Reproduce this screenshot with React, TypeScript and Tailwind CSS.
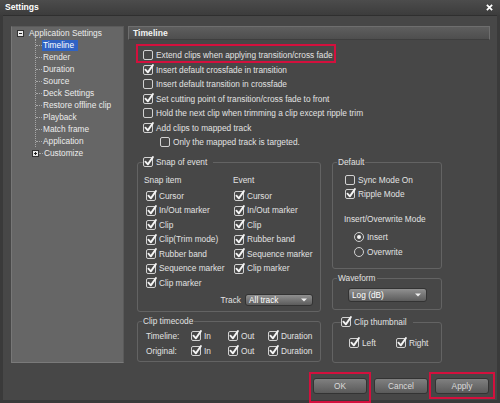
import React from 'react';
import clsx from 'clsx';

function Check({ on }: { on?: boolean }) {
  return (
    <span className="relative w-[10px] h-[10px] shrink-0 rounded-[2px] border border-[#d2d2d2]">
      {on && (
        <svg viewBox="0 0 10 10" className="absolute -left-px -top-[2px] w-[11px] h-[11px] overflow-visible">
          <path d="M2.2 5.2 L4.4 7.6 L9 1" fill="none" stroke="#f4f4f4" strokeWidth="1.7" strokeLinecap="round" strokeLinejoin="round" />
        </svg>
      )}
    </span>
  );
}

function Radio({ on }: { on?: boolean }) {
  return (
    <span className="w-[10px] h-[10px] shrink-0 rounded-full border border-[#d2d2d2] flex items-center justify-center">
      {on && <span className="w-[4px] h-[4px] rounded-full bg-[#f4f4f4]" />}
    </span>
  );
}

function Opt({ on, children, className }: { on?: boolean; children: React.ReactNode; className?: string }) {
  return (
    <div className={clsx('flex items-center gap-[3px] whitespace-nowrap', className)}>
      <Check on={on} />
      <span>{children}</span>
    </div>
  );
}

function Arrow() {
  return (
    <svg viewBox="0 0 6 4" className="w-[6px] h-[4px]">
      <path d="M0 0.5 L6 0.5 L3 3.5 Z" fill="#f0f0f0" />
    </svg>
  );
}

function Select({ label, className }: { label: string; className?: string }) {
  return (
    <div
      className={clsx(
        'rounded-[3px] border border-[#333] bg-gradient-to-b from-[#909090] to-[#5c5c5c] flex items-center justify-between pl-[3px] pr-[5px] text-white',
        className
      )}
    >
      <span>{label}</span>
      <Arrow />
    </div>
  );
}

function Btn({ children }: { children: React.ReactNode }) {
  return (
    <div className="w-[54px] h-[16px] rounded-[3px] border border-[#333] bg-gradient-to-b from-[#808080] to-[#5a5a5a] flex items-center justify-center text-[#dadada]">
      {children}
    </div>
  );
}

const tree = ['Timeline', 'Render', 'Duration', 'Source', 'Deck Settings', 'Restore offline clip', 'Playback', 'Match frame', 'Application'];

const snapItems = ['Cursor', 'In/Out marker', 'Clip', 'Clip(Trim mode)', 'Rubber band', 'Sequence marker', 'Clip marker'];
const eventItems = ['Cursor', 'In/Out marker', 'Clip', 'Rubber band', 'Sequence marker', 'Clip marker'];

export default function App() {
  return (
    <div className="relative w-[500px] h-[403px] overflow-hidden bg-[#3a3a3a] font-['Liberation_Sans',Arial,sans-serif] text-[8.3px] leading-none text-[#e2e2e2]">
      {/* Title bar */}
      <div className="h-[15px] flex items-center justify-between pl-[5px] pr-[7px] bg-gradient-to-b from-[#4c4c4c] to-[#3c3c3c]">
        <span className="font-bold text-[8.6px] text-white">Settings</span>
        <svg viewBox="0 0 8 8" className="w-[7px] h-[7px]">
          <path d="M1 1 L7 7 M7 1 L1 7" stroke="#fff" strokeWidth="2" />
        </svg>
      </div>

      {/* Window body */}
      <div className="mx-[3px] h-[385px] bg-[#474747] border-t border-[#2f2f2f] flex flex-col">
        <div className="flex pl-[8px] pt-[10px]">
          {/* Tree */}
          <div className="w-[113px] h-[337px] bg-[#666] border border-[#5a5a5a] border-l-[#777] border-b-[#7a7a7a] text-[#ececec]">
            <div className="h-[12px] flex items-center pl-[5px]">
              <span className="w-[7px] h-[7px] bg-[#e8e8e8] border border-[#333] flex items-center justify-center">
                <span className="w-[3px] h-px bg-[#222]" />
              </span>
              <span className="ml-[5px]">Application Settings</span>
            </div>
            <div className="ml-[23px] border-l border-dotted border-[#a8a8a8]">
              {tree.map((t, i) => (
                <div key={t} className="h-[12px] flex items-center">
                  <span className="w-[6px] border-t border-dotted border-[#a8a8a8]" />
                  <span className={clsx('px-[1px] h-[11px] flex items-center', i === 0 && 'bg-[#2f63c4] text-white pr-[4px]')}>{t}</span>
                </div>
              ))}
            </div>
            <div className="h-[12px] flex items-center pl-[20px]">
              <span className="w-[7px] h-[7px] bg-[#e8e8e8] border border-[#333] relative flex items-center justify-center">
                <span className="w-[3px] h-px bg-[#222]" />
                <span className="absolute w-px h-[3px] bg-[#222]" />
              </span>
              <span className="w-[4px] border-t border-dotted border-[#a8a8a8]" />
              <span className="ml-[1px]">Customize</span>
            </div>
          </div>

          {/* Right panel */}
          <div className="ml-[4px] w-[362px]">
            <div className="h-[14px] border border-[#6e6e6e] border-b-[#3e3e3e] bg-gradient-to-b from-[#5e5e5e] to-[#4e4e4e] flex items-center pl-[4px] font-bold text-[8.6px] text-[#f2f2f2]">
              Timeline
            </div>

            <div className="mt-[8px] pl-[15px]">
              <div className="relative">
                <Opt className="h-[14.5px]">Extend clips when applying transition/cross fade</Opt>
                <div className="absolute left-[-7px] top-[-4px] w-[200px] h-[19px] border-2 border-[#d3103d]" />
              </div>
              <Opt on className="h-[14.5px]">Insert default crossfade in transition</Opt>
              <Opt className="h-[14.5px]">Insert default transition in crossfade</Opt>
              <Opt on className="h-[14.5px]">Set cutting point of transition/cross fade to front</Opt>
              <Opt className="h-[14.5px]">Hold the next clip when trimming a clip except ripple trim</Opt>
              <Opt on className="h-[14.5px]">Add clips to mapped track</Opt>
              <Opt className="h-[14.5px] pl-[17px]">Only the mapped track is targeted.</Opt>
            </div>

            <div className="mt-[6.5px] ml-[9px] flex">
              {/* Left groups */}
              <div className="w-[184px] flex flex-col">
                <fieldset className="h-[156px] border border-[#636363] rounded-[3px]">
                  <legend className="ml-[5px] pr-[6px] h-[12px]">
                    <Opt on className="h-[12px]">Snap of event</Opt>
                  </legend>
                  <div className="pt-[6px] pl-[6px] flex">
                    <div className="w-[89px]">
                      <div className="h-[12px] flex items-center">Snap item</div>
                      <div className="mt-[2.75px] pl-[2px]">
                        {snapItems.map((s) => (
                          <Opt key={s} on className="h-[14.5px]">{s}</Opt>
                        ))}
                      </div>
                    </div>
                    <div>
                      <div className="h-[12px] flex items-center">Event</div>
                      <div className="mt-[2.75px] pl-[1px]">
                        {eventItems.map((s) => (
                          <Opt key={s} on className="h-[14.5px]">{s}</Opt>
                        ))}
                      </div>
                    </div>
                  </div>
                  <div className="mt-[3.5px] flex items-center justify-end pr-[7px] gap-[4px]">
                    <span>Track</span>
                    <Select label="All track" className="w-[68px] h-[12px]" />
                  </div>
                </fieldset>

                <fieldset className="mt-[3px] h-[47px] border border-[#636363] rounded-[3px]">
                  <legend className="ml-[4px] px-px h-[12px] flex items-center">Clip timecode</legend>
                  <div className="pt-[1.5px] pl-[8px]">
                    {['Timeline:', 'Original:'].map((r) => (
                      <div key={r} className="h-[15px] flex items-center">
                        <span className="w-[45px]">{r}</span>
                        <Opt on className="w-[37px]">In</Opt>
                        <Opt on className="w-[40px]">Out</Opt>
                        <Opt on>Duration</Opt>
                      </div>
                    ))}
                  </div>
                </fieldset>
              </div>

              {/* Right groups */}
              <div className="ml-[11px] w-[110px] flex flex-col">
                <fieldset className="h-[113px] border border-[#636363] rounded-[3px]">
                  <legend className="ml-[4px] px-px h-[12px] flex items-center">Default</legend>
                  <div className="pt-[5px] pl-[12px]">
                    <Opt className="h-[14px]">Sync Mode On</Opt>
                    <Opt on className="h-[14px]">Ripple Mode</Opt>
                  </div>
                  <div className="mt-[12px] pl-[11px] h-[12px] flex items-center">Insert/Overwrite Mode</div>
                  <div className="mt-[4.5px] pl-[21px]">
                    <div className="h-[15px] flex items-center gap-[3px]">
                      <Radio on />
                      <span>Insert</span>
                    </div>
                    <div className="h-[15px] flex items-center gap-[3px]">
                      <Radio />
                      <span>Overwrite</span>
                    </div>
                  </div>
                </fieldset>

                <fieldset className="mt-[3px] h-[38px] border border-[#636363] rounded-[3px]">
                  <legend className="ml-[4px] px-px h-[12px] flex items-center">Waveform</legend>
                  <div className="mt-[4px] pl-[15px]">
                    <Select label="Log (dB)" className="w-[79px] h-[14px]" />
                  </div>
                </fieldset>

                <fieldset className="mt-[6px] h-[47px] border border-[#636363] rounded-[3px]">
                  <legend className="ml-[8px] pr-[6px] h-[12px]">
                    <Opt on className="h-[12px]">Clip thumbnail</Opt>
                  </legend>
                  <div className="mt-[8px] pl-[16px] h-[14px] flex items-center">
                    <Opt on className="w-[47px]">Left</Opt>
                    <Opt on>Right</Opt>
                  </div>
                </fieldset>
              </div>
            </div>
          </div>
        </div>

        {/* Buttons */}
        <div className="mt-[15px] flex justify-end gap-[7px] pr-[8px]">
          <div className="relative">
            <Btn>OK</Btn>
            <div className="absolute left-[-4px] top-[-6px] right-[-4px] bottom-[-9px] border-2 border-[#d3103d]" />
          </div>
          <Btn>Cancel</Btn>
          <div className="relative">
            <Btn>Apply</Btn>
            <div className="absolute left-[-6px] top-[-6px] right-[-6px] bottom-[-5px] border-2 border-[#d3103d]" />
          </div>
        </div>
      </div>
    </div>
  );
}
